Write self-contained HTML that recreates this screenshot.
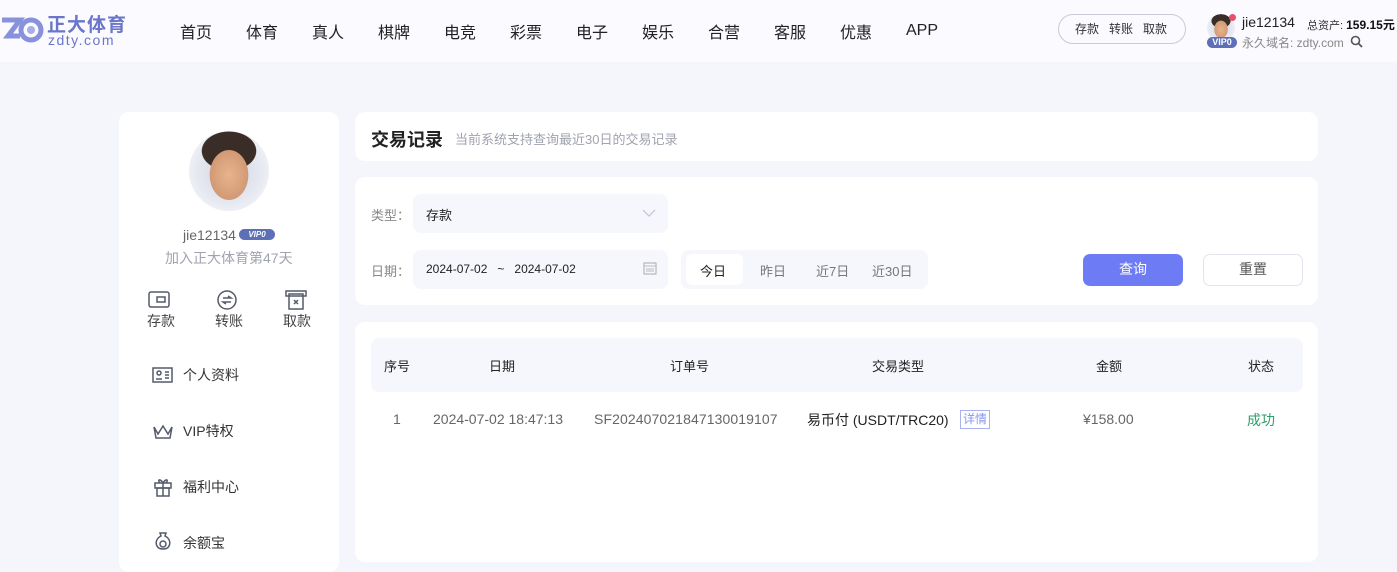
<!DOCTYPE html>
<html><head><meta charset="utf-8"><style>
*{margin:0;padding:0;box-sizing:border-box}
body{width:1397px;height:552px;overflow:hidden;background:#f5f6fc;font-family:"Liberation Sans","Noto Sans CJK SC",sans-serif;color:#333;position:relative}
.a{position:absolute}
.hdr{left:0;top:0;width:1397px;height:62px;background:#fafaff}
.nav span{position:absolute;top:19px;font-size:16px;color:#222}
.card{background:#fff;border-radius:10px}
.ic{stroke:#555a6a;fill:none;stroke-width:1.5}
.ava{border-radius:50%;background:radial-gradient(ellipse 34% 44% at 50% 55%,#e6b48e 0,#d29a74 70%,transparent 72%),radial-gradient(ellipse 42% 30% at 50% 25%,#3a2c26 0,#3a2c26 80%,transparent 82%),radial-gradient(circle at 50% 50%,#cfd3e2 0,#e8eaf2 60%,#fff 100%)}
</style></head><body>
<div class="a hdr"></div>
<svg class="a" style="left:0;top:16px" width="44" height="28" viewBox="0 0 44 28"><path d="M2 4h18l-12 16h12" stroke="#8891dc" stroke-width="5" fill="none"/><circle cx="31" cy="14" r="10" fill="none" stroke="#8891dc" stroke-width="5"/><circle cx="31" cy="14" r="4" fill="#a7aee8"/></svg>
<div class="a" style="left:47px;top:10px;font-size:19px;color:#6c76c9;font-weight:bold;letter-spacing:1px">正大体育</div>
<div class="a" style="left:48px;top:32px;font-size:14px;color:#6c76c9;letter-spacing:1.5px">zdty.com</div>
<div class="nav">
<span style="left:180px">首页</span><span style="left:246px">体育</span><span style="left:312px">真人</span><span style="left:378px">棋牌</span><span style="left:444px">电竞</span><span style="left:510px">彩票</span><span style="left:576px">电子</span><span style="left:642px">娱乐</span><span style="left:708px">合营</span><span style="left:774px">客服</span><span style="left:840px">优惠</span><span style="left:906px;top:22px">APP</span>
</div>
<div class="a" style="left:1058px;top:14px;width:128px;height:30px;border:1px solid #c9cad8;border-radius:15px;font-size:12px;color:#333;line-height:28px;padding-left:16px">存款&nbsp;&nbsp;&nbsp;转账&nbsp;&nbsp;&nbsp;取款</div>
<div class="a ava" style="left:1207px;top:14px;width:28px;height:28px"></div>
<div class="a" style="left:1229px;top:14px;width:7px;height:7px;border-radius:50%;background:#e8506a"></div>
<div class="a" style="left:1207px;top:37px;width:30px;height:11px;border-radius:6px;background:#5d6fb6;color:#fff;font-size:9px;font-weight:bold;line-height:11px;text-align:center">VIP0</div>
<div class="a" style="left:1242px;top:14px;font-size:14px;color:#222">jie12134</div>
<div class="a" style="left:1307px;top:16px;font-size:11px;color:#333">总资产: <b style="font-size:12px;color:#111">159.15元</b></div>
<div class="a" style="left:1242px;top:34px;font-size:12px;color:#888">永久域名: zdty.com</div>
<svg class="a" style="left:1350px;top:35px" width="13" height="13"><circle cx="5.5" cy="5.5" r="4" stroke="#555" stroke-width="1.6" fill="none"/><path d="M8.5 8.5l3.5 3.5" stroke="#555" stroke-width="1.8"/></svg>

<div class="a card" style="left:119px;top:112px;width:220px;height:460px"></div>
<div class="a ava" style="left:189px;top:131px;width:80px;height:80px"></div>
<div class="a" style="left:183px;top:227px;font-size:14px;color:#666">jie12134</div>
<div class="a" style="left:239px;top:229px;width:36px;height:11px;border-radius:6px;background:#5d6fb6;color:#fff;font-size:8px;font-weight:bold;line-height:11px;text-align:center;font-style:italic">VIP0</div>
<div class="a" style="left:165px;top:248px;font-size:14px;color:#a0a3b0">加入正大体育第47天</div>
<svg class="a" style="left:147px;top:290px" width="24" height="20"><rect x="2" y="2" width="20" height="15" rx="2" class="ic"/><path d="M10 7h8v5h-8z" class="ic"/></svg>
<svg class="a" style="left:216px;top:289px" width="22" height="22"><circle cx="11" cy="11" r="9" class="ic"/><path d="M7 9h8l-3-2M15 13H7l3 2" class="ic"/></svg>
<svg class="a" style="left:284px;top:289px" width="24" height="22"><rect x="2" y="2" width="20" height="5" class="ic"/><rect x="5" y="5" width="14" height="15" class="ic"/><path d="M10 11l4 4M14 11l-4 4" class="ic"/></svg>
<div class="a" style="left:147px;top:311px;font-size:14px;color:#444">存款</div>
<div class="a" style="left:215px;top:311px;font-size:14px;color:#444">转账</div>
<div class="a" style="left:283px;top:311px;font-size:14px;color:#444">取款</div>
<svg class="a" style="left:152px;top:366px" width="22" height="18"><rect x="1" y="2" width="19" height="14" class="ic"/><circle cx="7" cy="7" r="2" class="ic"/><path d="M4 13h6M13 6h4M13 9h4M13 12h4" class="ic"/></svg>
<div class="a" style="left:183px;top:365px;font-size:14px;color:#333">个人资料</div>
<svg class="a" style="left:151px;top:422px" width="24" height="18"><path d="M3 5l4 7 5-8 5 8 4-7-2 11H5z" class="ic"/></svg>
<div class="a" style="left:183px;top:421px;font-size:14px;color:#333">VIP特权</div>
<svg class="a" style="left:153px;top:477px" width="20" height="20"><rect x="2" y="6" width="16" height="5" class="ic"/><rect x="4" y="11" width="12" height="8" class="ic"/><path d="M10 6v13M10 6C7 1 4 3 7 6M10 6c3-5 6-3 3 0" class="ic"/></svg>
<div class="a" style="left:183px;top:477px;font-size:14px;color:#333">福利中心</div>
<svg class="a" style="left:153px;top:531px" width="20" height="21"><path d="M7 2h6l-1 3c4 2 6 6 4 10-2 4-10 4-12 0-2-4 0-8 4-10z" class="ic"/><circle cx="10" cy="13" r="3" class="ic"/></svg>
<div class="a" style="left:183px;top:533px;font-size:14px;color:#333">余额宝</div>

<div class="a card" style="left:355px;top:112px;width:963px;height:49px"></div>
<div class="a" style="left:371px;top:126px;font-size:18px;font-weight:bold;color:#222">交易记录</div>
<div class="a" style="left:455px;top:129px;font-size:13px;color:#a0a3b0">当前系统支持查询最近30日的交易记录</div>

<div class="a card" style="left:355px;top:177px;width:963px;height:128px"></div>
<div class="a" style="left:371px;top:205px;font-size:13px;color:#888">类型：</div>
<div class="a" style="left:413px;top:194px;width:255px;height:39px;background:#f6f7fc;border-radius:8px"></div>
<div class="a" style="left:426px;top:205px;font-size:13px;color:#222">存款</div>
<svg class="a" style="left:642px;top:209px" width="14" height="9"><path d="M1 1l6 6 6-6" stroke="#c0c3d0" fill="none" stroke-width="1.2"/></svg>
<div class="a" style="left:371px;top:261px;font-size:13px;color:#888">日期：</div>
<div class="a" style="left:413px;top:250px;width:255px;height:39px;background:#f6f7fc;border-radius:8px"></div>
<div class="a" style="left:426px;top:262px;font-size:12px;color:#222">2024-07-02&nbsp;&nbsp;&nbsp;~&nbsp;&nbsp;&nbsp;2024-07-02</div>
<svg class="a" style="left:643px;top:262px" width="14" height="13"><rect x="1" y="1" width="12" height="11" stroke="#aaa" fill="none"/><path d="M1 4h12M3 7h8M3 9h8" stroke="#bbb"/></svg>
<div class="a" style="left:681px;top:250px;width:247px;height:39px;background:#f6f7fc;border-radius:8px"></div>
<div class="a" style="left:686px;top:254px;width:57px;height:31px;background:#fff;border-radius:6px"></div>
<div class="a" style="left:700px;top:261px;font-size:13px;color:#222">今日</div>
<div class="a" style="left:760px;top:261px;font-size:13px;color:#777">昨日</div>
<div class="a" style="left:816px;top:261px;font-size:13px;color:#777">近7日</div>
<div class="a" style="left:872px;top:261px;font-size:13px;color:#777">近30日</div>
<div class="a" style="left:1083px;top:254px;width:100px;height:32px;background:#6d7cf5;border-radius:7px;color:#fff;font-size:14px;text-align:center;line-height:31px">查询</div>
<div class="a" style="left:1203px;top:254px;width:100px;height:32px;border:1px solid #e2e4ee;border-radius:7px;color:#555;font-size:14px;text-align:center;line-height:29px">重置</div>

<div class="a card" style="left:355px;top:322px;width:963px;height:240px"></div>
<div class="a" style="left:371px;top:338px;width:932px;height:54px;background:#f6f7fc;border-radius:8px"></div>
<div style="font-size:13px;color:#222">
<div class="a" style="left:384px;top:356px">序号</div>
<div class="a" style="left:489px;top:356px">日期</div>
<div class="a" style="left:670px;top:356px">订单号</div>
<div class="a" style="left:872px;top:356px">交易类型</div>
<div class="a" style="left:1096px;top:356px">金额</div>
<div class="a" style="left:1248px;top:356px">状态</div>
</div>
<div style="font-size:14px;color:#666">
<div class="a" style="left:393px;top:411px">1</div>
<div class="a" style="left:433px;top:411px">2024-07-02 18:47:13</div>
<div class="a" style="left:594px;top:411px;letter-spacing:0.1px">SF202407021847130019107</div>
<div class="a" style="left:807px;top:410px;color:#222">易币付 (USDT/TRC20)</div>
<div class="a" style="left:960px;top:410px;border:1px solid #a9b1f0;color:#8a96ee;font-size:12px;padding:0 2px;line-height:17px">详情</div>
<div class="a" style="left:1083px;top:411px">¥158.00</div>
<div class="a" style="left:1247px;top:410px;color:#2e9e6a">成功</div>
</div>
</body></html>
